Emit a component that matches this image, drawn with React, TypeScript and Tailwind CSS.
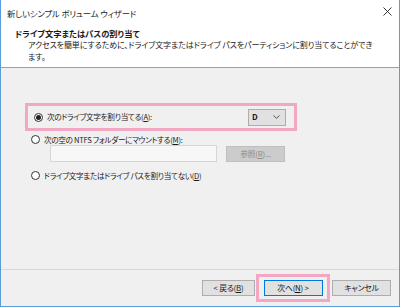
import React from 'react'

const jp = "font-['Meiryo_UI','Noto_Sans_CJK_JP','Noto_Sans',sans-serif] [font-feature-settings:'palt']"

function Radio({ checked }: { checked?: boolean }) {
  return (
    <span className="w-[9px] h-[9px] rounded-full border border-[#333] bg-white flex items-center justify-center shrink-0">
      {checked && <span className="w-[5px] h-[5px] rounded-full bg-[#222]" />}
    </span>
  )
}

function Btn({ children, primary, disabled }: { children: React.ReactNode; primary?: boolean; disabled?: boolean }) {
  return (
    <div
      className={
        'h-[16px] w-[59px] flex items-center justify-center text-[7.8px] tracking-[-0.2px] leading-none border ' +
        (disabled
          ? 'bg-[#cccccc] border-[#bfbfbf] text-[#8d8d8d]'
          : primary
            ? 'bg-[#e1e1e1] border-[#0078d7] text-[#111]'
            : 'bg-[#e1e1e1] border-[#adadad] text-[#111]')
      }
    >
      {children}
    </div>
  )
}

export default function App() {
  return (
    <div className={`w-[400px] h-[307px] flex flex-col bg-[#f0f0f0] border-l border-r border-b border-[#5a9bd8] ${jp} text-[#1a1a1a]`}>
      {/* Title bar */}
      <div className="h-[26px] bg-white flex items-center justify-between pl-[6px] pr-[6px] shrink-0">
        <span className="text-[8.3px] tracking-[-0.1px] leading-none">新しいシンプル ボリューム ウィザード</span>
        <svg width="9" height="9" viewBox="0 0 9 9" className="mr-[1px] -mt-[3px]">
          <path d="M0.5 0.5 L8.5 8.5 M8.5 0.5 L0.5 8.5" stroke="#222" strokeWidth="0.9" />
        </svg>
      </div>

      {/* Header */}
      <div className="h-[42px] bg-white border-b border-[#a0a0a0] shrink-0 pt-[2px] pl-[14px] pr-[22px]">
        <div className="text-[8.3px] leading-[11px] font-bold">ドライブ文字またはパスの割り当て</div>
        <div className="pl-[13px] text-[8px] tracking-[-0.1px] leading-[12px] text-[#222]">
          アクセスを簡単にするために、ドライブ文字またはドライブ パスをパーティションに割り当てることができます。
        </div>
      </div>

      {/* Body */}
      <div className="flex-1 pt-[35px] pl-[24px] flex flex-col text-[7.6px] tracking-[-0.3px] leading-none">
        <div className="w-[272px] h-[28px] border-[3px] border-[#f2a7c3] flex items-center pl-[6px] pr-[8px]">
          <Radio checked />
          <span className="ml-[4px]">
            次のドライブ文字を割り当てる(<span className="underline">A</span>):
          </span>
          <div className="ml-auto w-[38px] h-[17px] bg-[#e1e1e1] border border-[#adadad] flex items-center justify-between pl-[3px] pr-[5px]">
            <span className="font-bold text-[8px]">D</span>
            <svg width="7" height="4" viewBox="0 0 7 4">
              <path d="M0.5 0.5 L3.5 3.3 L6.5 0.5" fill="none" stroke="#444" strokeWidth="0.9" />
            </svg>
          </div>
        </div>

        <div className="flex items-center pl-[6px] mt-[3px] h-[11px]">
          <Radio />
          <span className="ml-[4px]">
            次の空の NTFS フォルダーにマウントする(<span className="underline">M</span>):
          </span>
        </div>
        <div className="flex items-center pl-[25px] gap-[9px]">
          <div className="w-[167px] h-[17px] bg-[#f7f7f7] border border-[#d5d5d5]" />
          <Btn disabled>
            参照(<span className="underline">R</span>)...
          </Btn>
        </div>

        <div className="flex items-center pl-[6px] mt-[8px] h-[11px]">
          <Radio />
          <span className="ml-[4px]">
            ドライブ文字またはドライブ パスを割り当てない(<span className="underline">D</span>)
          </span>
        </div>
      </div>

      {/* Footer */}
      <div className="h-[37px] border-t border-[#d9d9d9] shrink-0 flex items-center justify-end pr-[8px]">
        <div className="h-[16px] w-[53px] flex items-center justify-center text-[7.8px] tracking-[-0.2px] leading-none border bg-[#e1e1e1] border-[#adadad]">
          &lt; 戻る(<span className="underline">B</span>)
        </div>
        <div className="ml-[1px] w-[74px] h-[28px] border-[3px] border-[#f2a7c3] flex items-center justify-center">
          <Btn primary>
            次へ(<span className="underline">N</span>) &gt;
          </Btn>
        </div>
        <div className="ml-[2px]">
          <Btn>キャンセル</Btn>
        </div>
      </div>
    </div>
  )
}
